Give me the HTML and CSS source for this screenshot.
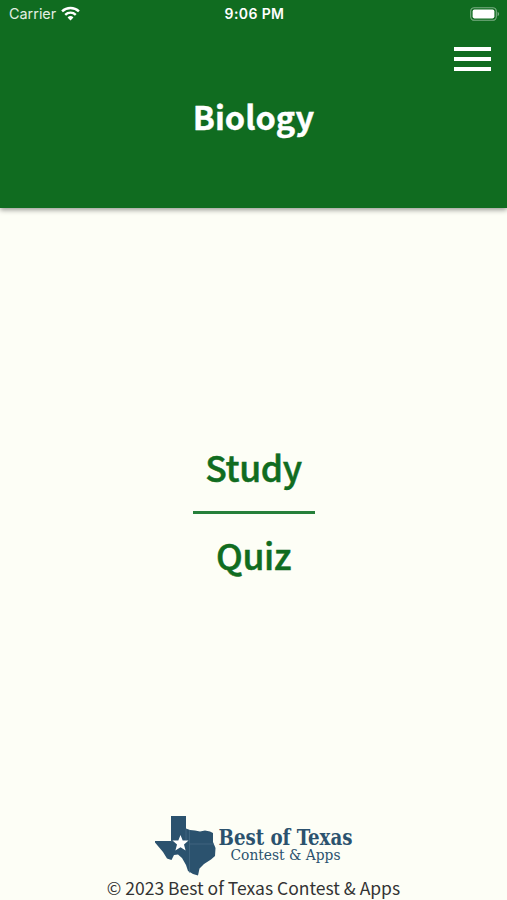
FILE: index.html
```
<!DOCTYPE html>
<html lang="en">
<head>
  <meta charset="UTF-8">
  <meta name="viewport" content="width=device-width, initial-scale=1">
  <title>Biology</title>
  <link rel="stylesheet" href="styles.css">
</head>
<body>

  <header class="header">
    <div class="status-bar">
      <div class="carrier">
        <span>Carrier</span>
        <svg class="wifi" viewBox="0 0 18 14" width="19" height="15">
          <path d="M1 5.1a11.5 11.5 0 0 1 16 0M4 8.2a7.2 7.2 0 0 1 10 0" fill="none" stroke="#fff" stroke-width="2.3"/>
          <path d="M9 13.6L6.2 10.8a4 4 0 0 1 5.6 0z" fill="#fff"/>
        </svg>
      </div>
      <div class="time">9:06 PM</div>
      <svg class="battery" viewBox="0 0 30 14" width="30" height="14">
        <rect x="0.7" y="0.7" width="25.6" height="12.6" rx="3.6" fill="none" stroke="#fff" stroke-opacity="0.45" stroke-width="1.1"/>
        <rect x="2.6" y="2.6" width="21.8" height="8.8" rx="1.8" fill="#fff"/>
        <path d="M27.6 4.8c2 .8 2 3.6 0 4.4z" fill="#fff" fill-opacity="0.45"/>
      </svg>
    </div>
    <button class="menu" aria-label="Menu">
      <span></span>
      <span></span>
      <span></span>
    </button>
    <h1>Biology</h1>
  </header>

  <main class="options">
    <a class="option" href="#">Study</a>
    <hr>
    <a class="option" href="#">Quiz</a>
  </main>

  <footer class="footer">
    <svg class="logo" viewBox="0 0 200 62" width="200" height="62">
      <path class="texas" d="M17 1H32V13.5L36 15L41 15.5L46 16.5L51 15.5L56 16.5L59 18V27L61.5 33L61 41L57 44.5L50 49L45.5 53.5L44 60.5L39 59L34 56L32 50L28 43L24 39.5L20 40L17.5 45L13 43.5L9 37L1 27.5V26H17Z"/>
      <path class="county" d="M32 14V26M17 26H32M36 29H60M35.5 15V58"/>
      <path class="star" d="M26.5 20L28.7 25.6H34.5L30 29.4L31.6 35.5L26.5 32.2L21.4 35.5L23 29.4L18.5 25.6H24.3Z"/>
      <text class="brand" x="64.5" y="30.3" textLength="134" lengthAdjust="spacingAndGlyphs">Best of Texas</text>
      <text class="brand-sub" x="76.5" y="44.5" textLength="110" lengthAdjust="spacingAndGlyphs">Contest &amp; Apps</text>
    </svg>
    <p>© 2023 Best of Texas Contest &amp; Apps</p>
  </footer>

</body>
</html>
```
FILE: styles.css
```
* {
  box-sizing: border-box;
}

body {
  margin: 0;
  height: 900px;
  display: flex;
  flex-direction: column;
  overflow: hidden;
  background: #fdfef6;
  font-family: "Noto Sans CJK SC", "Noto Sans", sans-serif;
}

.header {
  height: 208px;
  background: #106c20;
  color: #fff;
  box-shadow: 0 2px 5px rgba(0, 0, 0, 0.4);
}

.status-bar {
  display: grid;
  grid-template-columns: 1fr auto 1fr;
  align-items: center;
  height: 27px;
  padding: 0 7px 0 9px;
  font-family: Inter, sans-serif;
  font-size: 14px;
}

.carrier {
  display: flex;
  align-items: center;
  gap: 5px;
  color: #e3efe3;
  font-size: 14.4px;
}

.time {
  font-weight: 600;
  letter-spacing: 0.4px;
}

.battery {
  justify-self: end;
}

.menu {
  display: flex;
  flex-direction: column;
  gap: 6px;
  margin: 20px 16px 0 auto;
  padding: 0;
  border: none;
  background: none;
}

.menu span {
  width: 37px;
  height: 4px;
  background: #fff;
}

h1 {
  margin: 20px 0 0;
  font-size: 32.5px;
  font-weight: 700;
  line-height: 50px;
  text-align: center;
  -webkit-text-stroke: 0.4px #fff;
}

.options {
  flex: 1;
  display: flex;
  flex-direction: column;
  align-items: center;
  padding-top: 229px;
}

.option {
  color: #106c20;
  font-size: 35.5px;
  font-weight: 500;
  line-height: 60px;
  letter-spacing: -0.4px;
  text-decoration: none;
  -webkit-text-stroke: 0.5px #106c20;
}

.options hr {
  width: 122px;
  height: 3px;
  margin: 14px 0 11px;
  border: none;
  background: #26803a;
}

.footer {
  height: 85px;
  text-align: center;
}

.logo {
  display: block;
  margin: 0 auto;
  overflow: visible;
}

.texas {
  fill: #2b526e;
}

.county {
  fill: none;
  stroke: #547690;
  stroke-width: 0.5;
}

.star {
  fill: #fff;
}

.brand,
.brand-sub {
  fill: #2b526e;
  font-family: "DejaVu Serif Condensed", "DejaVu Serif", serif;
}

.brand {
  font-size: 22.5px;
  font-weight: 700;
}

.brand-sub {
  font-size: 15px;
}

.footer p {
  margin: 0;
  color: #333;
  font-size: 17.5px;
  line-height: 22px;
}
```
